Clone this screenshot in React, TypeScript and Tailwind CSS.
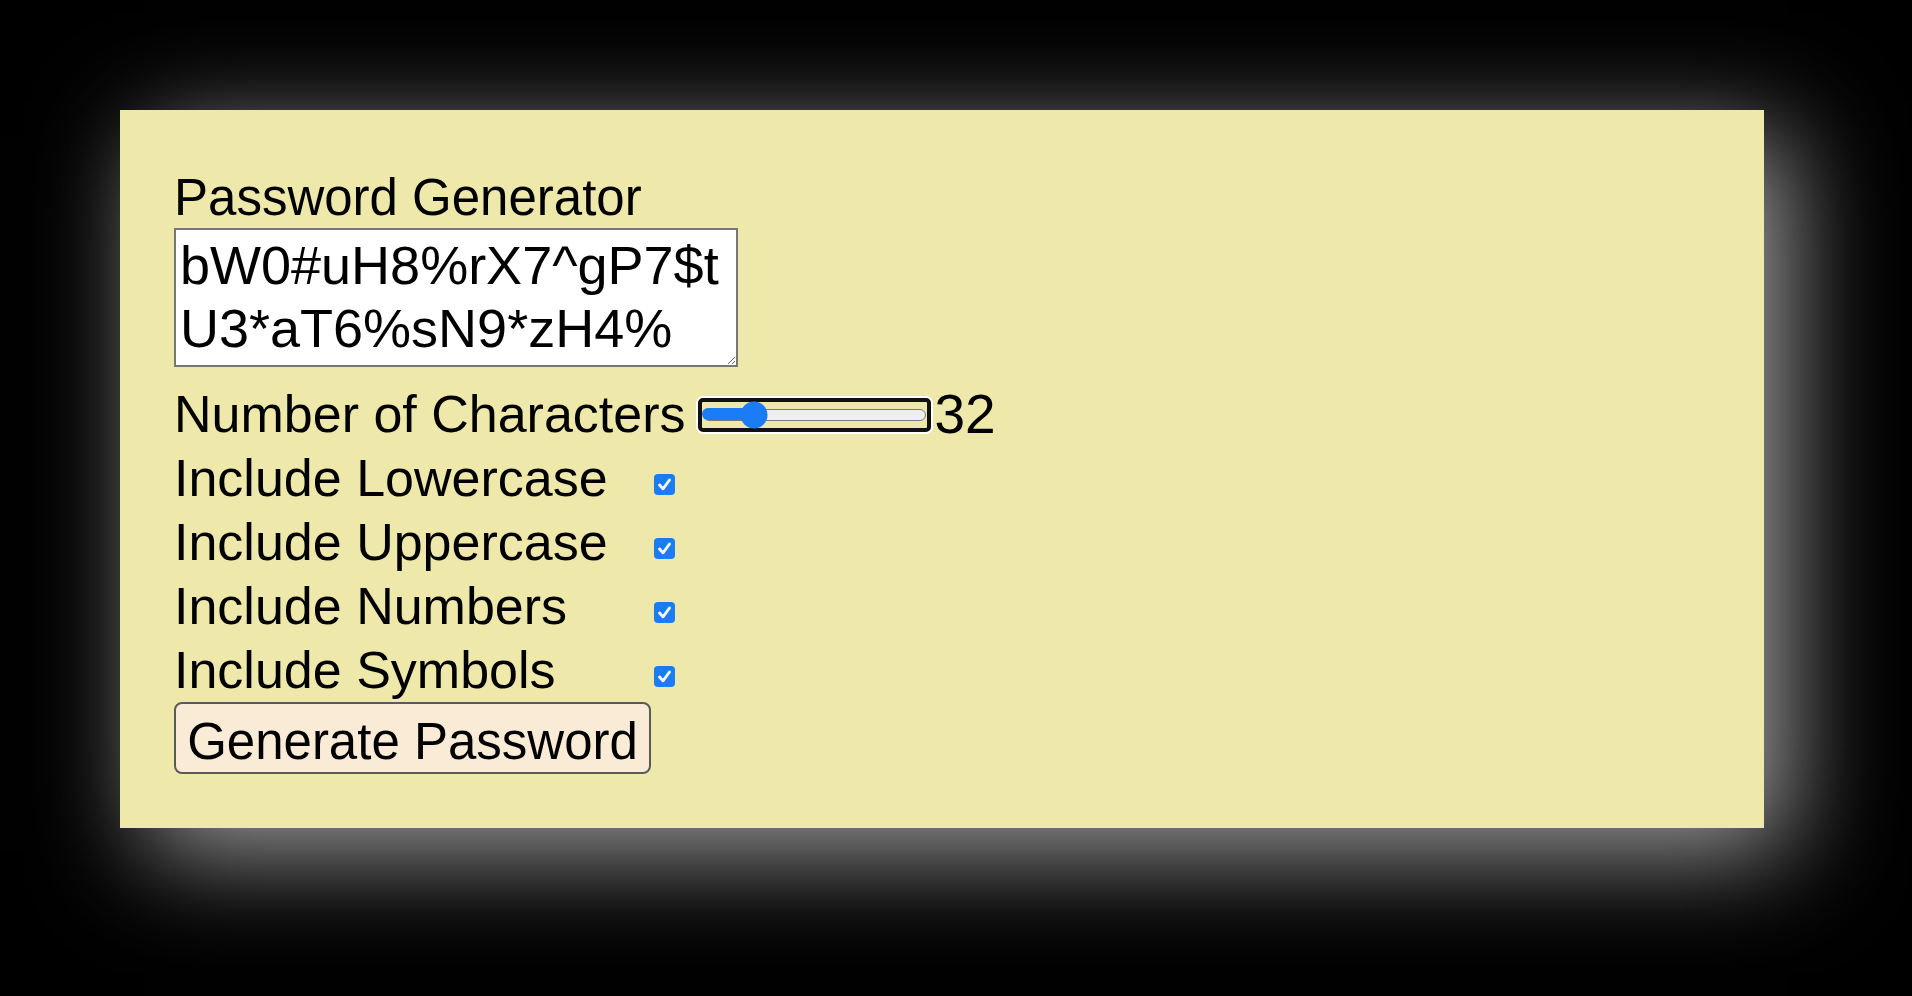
import React from 'react';

const options = [
  { label: 'Include Lowercase', checked: true },
  { label: 'Include Uppercase', checked: true },
  { label: 'Include Numbers', checked: true },
  { label: 'Include Symbols', checked: true },
];

const CheckBox: React.FC<{ checked: boolean }> = ({ checked }) => (
  <span className="relative mt-[28px] block w-[21px] h-[21px]">
    <input
      type="checkbox"
      defaultChecked={checked}
      className="appearance-none block m-0 w-[21px] h-[21px] rounded-[4px] bg-[#1a7cf6]"
    />
    <svg className="absolute inset-0 pointer-events-none" width="21" height="21" viewBox="0 0 21 21">
      <path d="M5.5 11 L9 14.8 L15.5 6" fill="none" stroke="#fff" strokeWidth="2.8" strokeLinecap="round" strokeLinejoin="round" />
    </svg>
  </span>
);

const LengthSlider: React.FC<{ value: number; min: number; max: number }> = ({ value, min, max }) => {
  const pct = ((value - min) / (max - min)) * 100;
  return (
    <div role="slider" aria-valuenow={value} className="ml-[10px] w-[237px] h-[38px] rounded-[7px] border-[2px] border-white">
      <div className="h-full rounded-[5px] border-[4px] border-[#111] flex items-center px-[1px]">
        <div className="relative w-full h-[12px] rounded-full bg-[#efefef] border-[1.5px] border-[#7a7a7a]">
          <div className="absolute left-[-1.5px] top-[-1.5px] h-[12px] rounded-full bg-[#1a7cf6]" style={{ width: `calc(${pct}% + 12px)` }} />
          <div
            className="absolute top-1/2 w-[27px] h-[27px] -translate-x-1/2 -translate-y-1/2 rounded-full bg-[#1a7cf6]"
            style={{ left: `calc(${pct}% + 6px)` }}
          />
        </div>
      </div>
    </div>
  );
};

export default function App() {
  return (
    <div className="min-h-screen bg-black pt-[110px] pl-[120px] font-['Liberation_Sans',Arial,sans-serif] text-black">
      <div className="w-[1644px] h-[718px] bg-[#eee8aa] shadow-[25px_25px_100px_#a0a0a0] pt-[58px] pl-[54px]">
        <div className="text-[51px] leading-[60px]">Password Generator</div>
        <textarea
          readOnly
          value="bW0#uH8%rX7^gP7$tU3*aT6%sN9*zH4%"
          className="block w-[564px] h-[139px] border-2 border-[#767676] bg-white pl-[4px] pr-[4px] py-[4px] text-[54px] leading-[63px] font-['Liberation_Sans',Arial,sans-serif] text-black outline-none"
        />

        <div className="mt-[16px] flex items-center text-[52px] leading-[63px]">
          <span>Number of Characters</span>
          <LengthSlider value={32} min={8} max={128} />
          <span className="ml-[2px] text-[55px]">32</span>
        </div>

        {options.map(opt => (
          <div key={opt.label} className="flex items-start text-[52px] leading-[64px]">
            <span className="w-[480px]">{opt.label}</span>
            <CheckBox checked={opt.checked} />
          </div>
        ))}

        <button className="block w-[477px] h-[72px] border-2 border-[#5a5a5a] rounded-[8px] bg-[#faebd7] text-[51px] leading-[60px] pt-[8px] pb-[2px] text-center">
          Generate Password
        </button>
      </div>
    </div>
  );
}
